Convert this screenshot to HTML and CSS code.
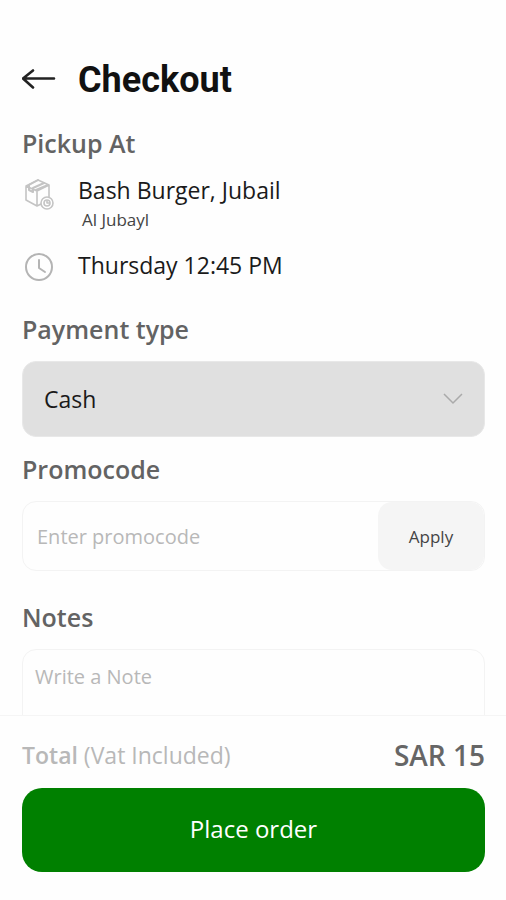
FILE: index.html
```html
<!DOCTYPE html>
<html lang="en">
<head>
  <meta charset="UTF-8">
  <meta name="viewport" content="width=device-width, initial-scale=1.0">
  <title>Checkout</title>
  <link rel="stylesheet" href="styles.css">
</head>
<body>
  <form class="page">
    <main class="content">
      <header class="header">
        <a href="#" class="back" aria-label="Back">
          <svg width="34" height="22" viewBox="0 0 34 22" fill="none" stroke="#222" stroke-width="2.6" stroke-linecap="round" stroke-linejoin="round">
            <path d="M32 9.5H1.5M11 1.5L1 9.5l10 9"/>
          </svg>
        </a>
        <h1>Checkout</h1>
      </header>

      <section class="pickup">
        <h2>Pickup At</h2>
        <div class="pickup-row">
          <svg class="pickup-icon" width="34" height="38" viewBox="0 0 34 38" fill="none" stroke="#c4c4c4" stroke-width="1.6" stroke-linejoin="round" stroke-linecap="round">
            <path d="M4 12l12-6 11 5v13M4 12v14l11 6 4-2M4 12l11 5 12-6M15 17v15"/>
            <path stroke-width="2" d="M7 11l9-5M11 14l11-5M7 11v5l4 2v-4M14 16l12-5"/>
            <circle cx="25" cy="29" r="6" fill="#fff"/>
            <circle cx="25" cy="29" r="3"/>
            <path d="M25 27v2h2"/>
          </svg>
          <div>
            <p class="place">Bash Burger, Jubail</p>
            <p class="city">Al Jubayl</p>
          </div>
        </div>
        <div class="pickup-row">
          <svg class="pickup-icon" width="34" height="36" viewBox="0 0 34 36" fill="none" stroke="#b4b4b4" stroke-width="2" stroke-linecap="round" stroke-linejoin="round">
            <circle cx="17" cy="18" r="13"/>
            <path d="M17 11v8l6 4"/>
          </svg>
          <p class="place">Thursday 12:45 PM</p>
        </div>
      </section>

      <section class="payment">
        <h2><label for="payment">Payment type</label></h2>
        <div class="select-box">
          <select id="payment">
            <option>Cash</option>
          </select>
          <svg class="chevron" width="20" height="12" viewBox="0 0 20 12" fill="none" stroke="#aaa" stroke-width="1.5">
            <path d="M1 1l9 9 9-9"/>
          </svg>
        </div>
      </section>

      <section class="promo">
        <h2><label for="promocode">Promocode</label></h2>
        <div class="promo-box">
          <input type="text" id="promocode" placeholder="Enter promocode">
          <button type="button" class="apply">Apply</button>
        </div>
      </section>

      <section class="notes">
        <h2><label for="notes">Notes</label></h2>
        <textarea id="notes" placeholder="Write a Note"></textarea>
      </section>
    </main>

    <footer class="footer">
      <div class="total">
        <p class="total-label"><b>Total</b> (Vat Included)</p>
        <p class="amount">SAR 15</p>
      </div>
      <button type="submit" class="place-order">Place order</button>
    </footer>
  </form>
</body>
</html>
```

FILE: styles.css
```css
* {
  box-sizing: border-box;
}
body {
  margin: 0;
  background-color: #fefefe;
  font-family: "Open Sans", "Noto Sans", sans-serif;
  color: #1a1a1a;
}
h1, h2, p {
  margin: 0;
}
input, select, textarea, button {
  font-family: inherit;
}
.page {
  display: flex;
  flex-direction: column;
  height: 100vh;
}
.content {
  flex: 1;
  min-height: 0;
  overflow-y: auto;
  scrollbar-width: none;
  padding: 57px 21px 0 22px;
}
.header {
  display: flex;
  align-items: center;
  gap: 22px;
}
.back {
  display: flex;
}
h1 {
  font-family: Roboto, sans-serif;
  font-size: 36px;
  line-height: 46px;
  color: #111;
}
h2 {
  font-size: 25px;
  font-weight: 600;
  line-height: 32px;
  color: #636363;
}
.pickup {
  display: flex;
  flex-direction: column;
  gap: 15px;
  padding-top: 24px;
}
.pickup-row {
  display: flex;
  align-items: flex-start;
  gap: 22px;
}
.pickup-icon {
  flex: none;
}
.place {
  font-size: 23px;
  line-height: 32px;
}
.city {
  padding-left: 4px;
  font-size: 17px;
  line-height: 28px;
  color: #444;
}
.payment {
  padding-top: 28px;
}
.select-box {
  display: grid;
  align-items: center;
  margin-top: 16px;
}
.select-box select,
.chevron {
  grid-area: 1 / 1;
}
.select-box select {
  appearance: none;
  height: 76px;
  padding: 0 21px;
  border: 1px solid #e8e8e8;
  border-radius: 14px;
  background-color: #e0e0e0;
  font-size: 23px;
  color: #1a1a1a;
}
.chevron {
  justify-self: end;
  margin-right: 22px;
  pointer-events: none;
}
.promo {
  padding-top: 16px;
}
.promo-box {
  display: flex;
  height: 70px;
  margin-top: 16px;
  border: 1px solid #f3f3f3;
  border-radius: 14px;
  overflow: hidden;
}
.promo-box input {
  flex: 1;
  min-width: 0;
  padding: 0 14px;
  border: none;
  background: none;
  font-size: 20px;
}
::placeholder {
  color: #b8b8b8;
}
.apply {
  width: 106px;
  border: none;
  border-radius: 14px;
  background-color: #f5f5f5;
  font-size: 17px;
  color: #444;
}
.notes {
  padding-top: 30px;
}
.notes textarea {
  display: block;
  width: 100%;
  height: 130px;
  margin-top: 16px;
  padding: 13px 12px;
  border: 1px solid #f3f3f3;
  border-radius: 14px;
  background: none;
  font-size: 20px;
  resize: none;
}
.footer {
  padding: 23px 21px 28px 22px;
  border-top: 1px solid #f5f5f5;
}
.total {
  display: flex;
  justify-content: space-between;
  align-items: center;
  line-height: 32px;
}
.total-label {
  font-size: 23px;
  color: #b8b8b8;
}
.total-label b {
  font-weight: 600;
}
.amount {
  font-size: 28px;
  font-weight: 600;
  color: #666;
}
.place-order {
  width: 100%;
  height: 84px;
  margin-top: 17px;
  padding-bottom: 4px;
  border: none;
  border-radius: 20px;
  background-color: #008000;
  font-size: 24px;
  color: #fff;
}
```
